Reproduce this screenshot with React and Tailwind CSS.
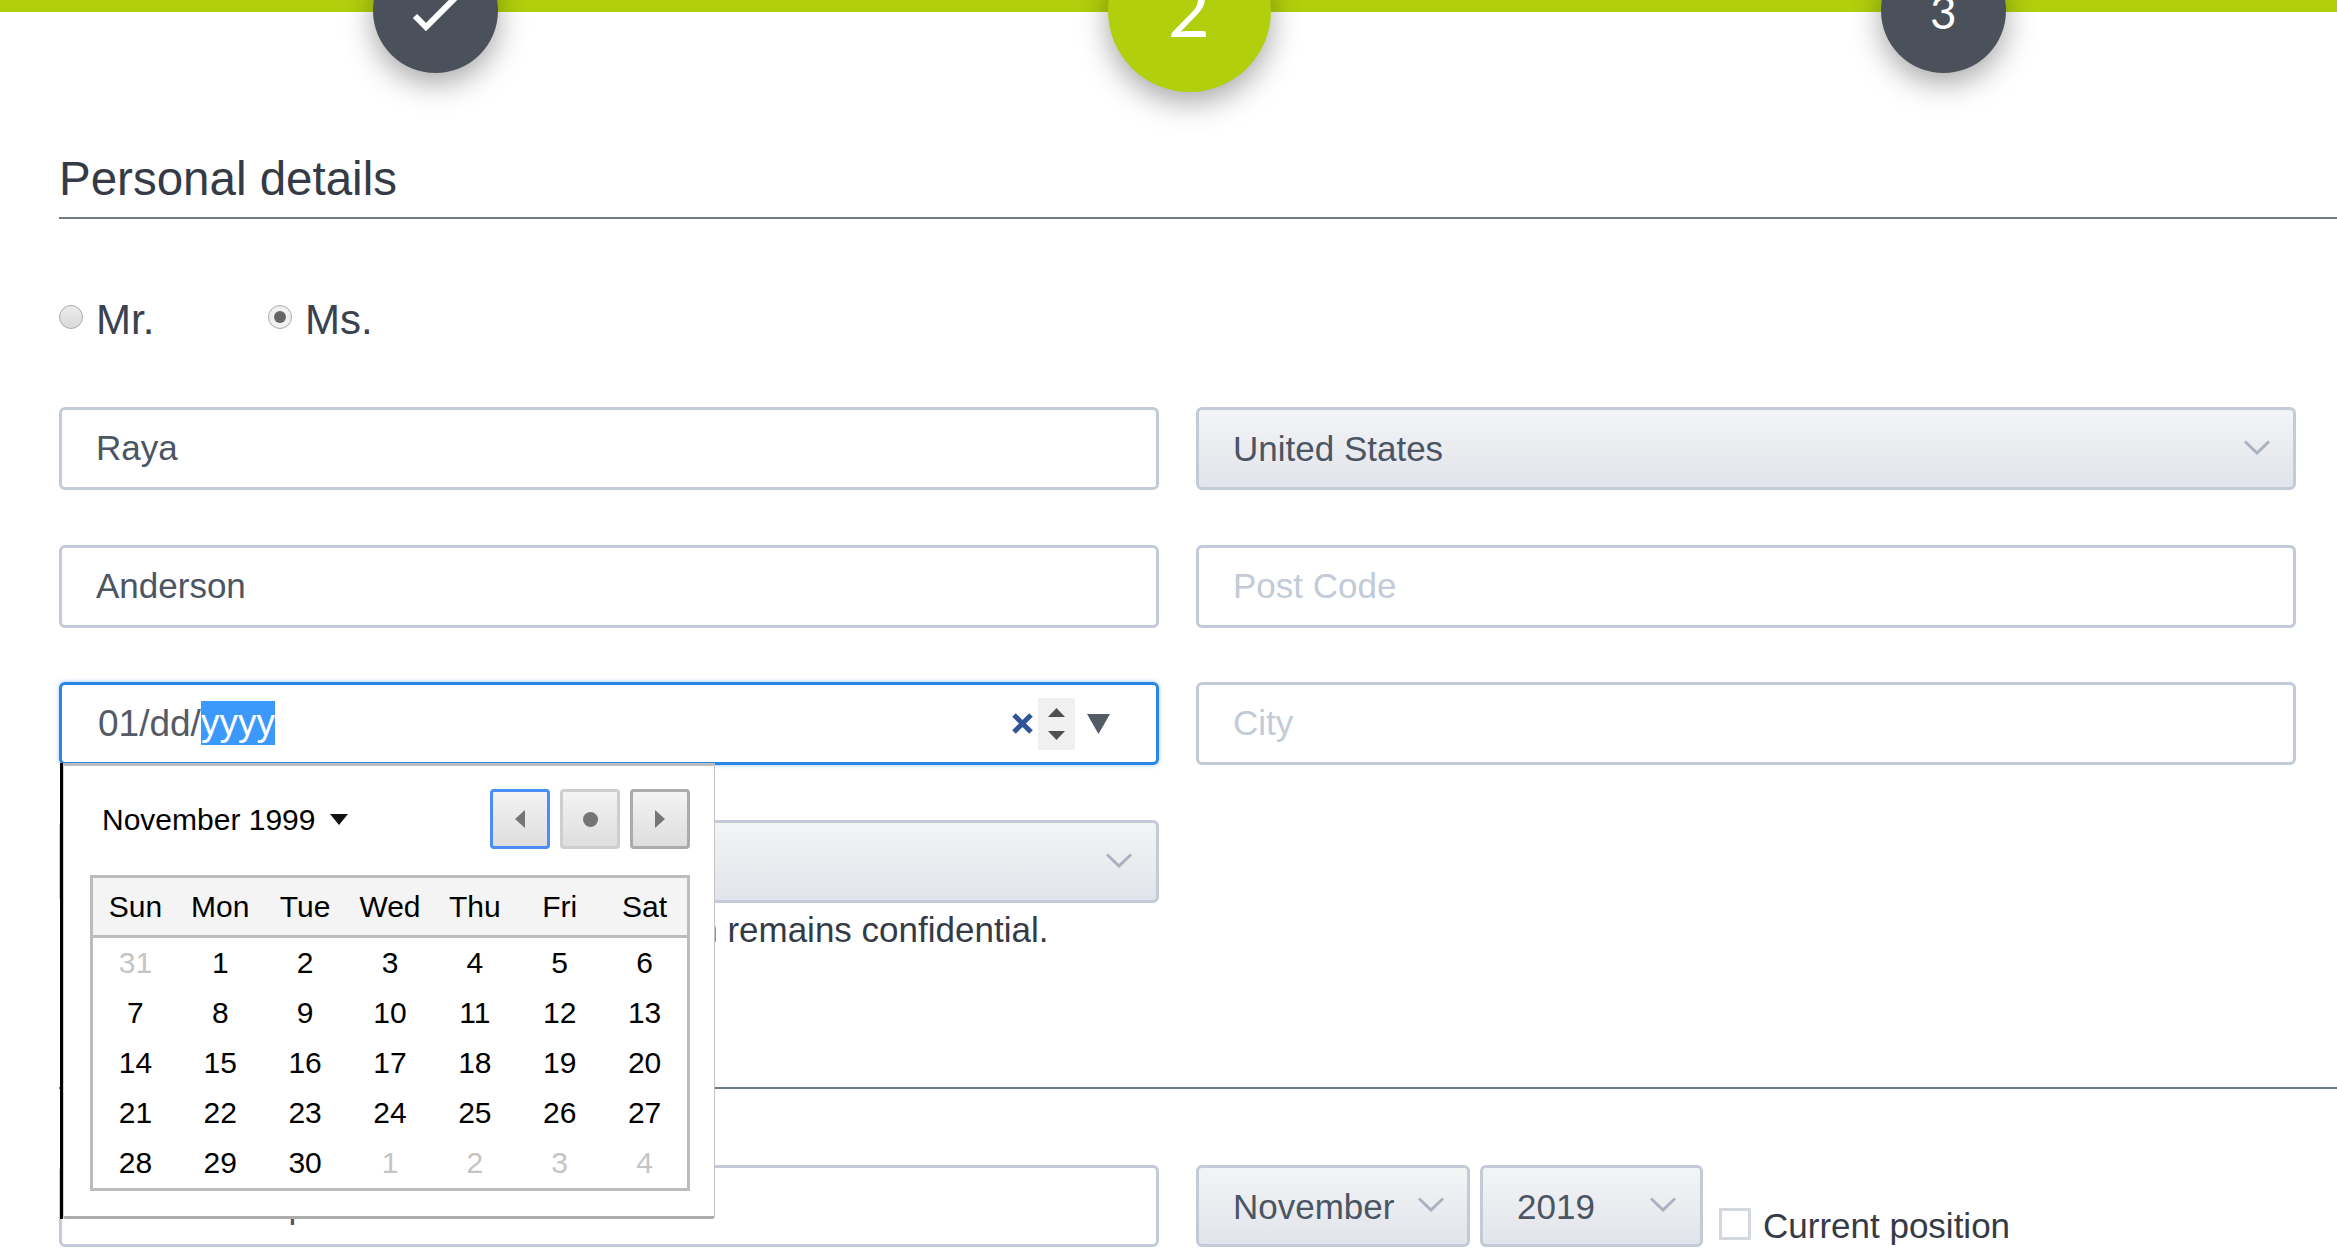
import React from 'react';

const FONT = { fontFamily: '"Liberation Sans", Arial, sans-serif' };

const WEEK_DAYS = ['Sun', 'Mon', 'Tue', 'Wed', 'Thu', 'Fri', 'Sat'];
const DAYS = [
  [31, 1, 2, 3, 4, 5, 6],
  [7, 8, 9, 10, 11, 12, 13],
  [14, 15, 16, 17, 18, 19, 20],
  [21, 22, 23, 24, 25, 26, 27],
  [28, 29, 30, 1, 2, 3, 4],
];

function Chevron({ className = '' }) {
  return (
    <svg width="26" height="15" viewBox="0 0 26 15" fill="none" className={className}>
      <path d="M1 1.5 L13 13 L25 1.5" stroke="#aab2c2" strokeWidth="3" />
    </svg>
  );
}

function TextField({ value, placeholder, textClass = '' }) {
  return (
    <div className="h-full border-[3px] border-[#c3cad8] rounded-[6px] bg-white flex items-center pl-[34px] text-[35px]">
      {value ? (
        <span className={`text-[#4b5563] ${textClass}`}>{value}</span>
      ) : (
        <span className={`text-[#c3cad8] ${textClass}`}>{placeholder}</span>
      )}
    </div>
  );
}

function SelectField({ value, className = '', pad = 'pr-[24px]' }) {
  return (
    <div className={`h-full border-[3px] border-[#c3cad8] rounded-[6px] bg-gradient-to-b from-[#f3f4f6] to-[#e1e4ea] flex items-center justify-between pl-[34px] ${pad} text-[35px] text-[#4b5563] ${className}`}>
      <span className="mt-[2px]">{value}</span>
      <Chevron className="-mt-[2px]" />
    </div>
  );
}

function StepCircle({ className, children }) {
  return (
    <div className={`absolute rounded-full shadow-[0_10px_30px_rgba(0,0,0,0.35)] ${className}`}>
      {children}
    </div>
  );
}

function NavButton({ className, children }) {
  return (
    <div className={`w-[60px] h-[60px] border-[3px] rounded-[4px] bg-gradient-to-b from-[#f3f3f3] to-[#dedede] flex items-center justify-center ${className}`}>
      {children}
    </div>
  );
}

function Calendar() {
  return (
    <div className="absolute left-[1px] top-[81px] w-[655px] h-[456px] border-l-[3px] border-black z-10">
      <div className="h-full bg-white border-t-[3px] border-b-[3px] border-l-[1px] border-r-[1px] border-t-[#bdbdbd] border-b-[#acacac] border-l-[#d0d0d0] border-r-[#c4c4c4] rounded-b-[3px] pl-[26px] pr-[24px] pt-[23px] text-black">
        <div className="flex items-center justify-between h-[60px]">
          <div className="flex items-center text-[30px] pl-[12px]">
            <span>November 1999</span>
            <svg width="18" height="11" viewBox="0 0 18 11" className="ml-[15px]">
              <path d="M0 0 H18 L9 11 Z" fill="#111" />
            </svg>
          </div>
          <div className="flex gap-[10px]">
            <NavButton className="border-[#4a8ef5]">
              <svg width="10" height="18" viewBox="0 0 10 18"><path d="M10 0 V18 L0 9 Z" fill="#757575" /></svg>
            </NavButton>
            <NavButton className="border-[#cecece]">
              <div className="w-[15px] h-[15px] rounded-full bg-[#757575]" />
            </NavButton>
            <NavButton className="border-[#ababab]">
              <svg width="10" height="18" viewBox="0 0 10 18"><path d="M0 0 V18 L10 9 Z" fill="#757575" /></svg>
            </NavButton>
          </div>
        </div>
        <div className="mt-[26px] border-[3px] border-[#bcbcbc] text-[30px]">
          <div className="grid grid-cols-7 h-[60px] bg-[#f4f4f4] border-b-[3px] border-[#bcbcbc] items-center text-center">
            {WEEK_DAYS.map((d) => (
              <span key={d}>{d}</span>
            ))}
          </div>
          <div className="grid grid-cols-7 auto-rows-[50px] items-center text-center pb-[1px] -mt-[1px]">
            {DAYS.map((row, r) =>
              row.map((d, c) => {
                const muted = (r === 0 && d > 7) || (r === 4 && d < 7);
                return (
                  <span key={`${r}-${c}`} className={muted ? 'text-[#c4c4c4]' : 'text-black'}>
                    {d}
                  </span>
                );
              })
            )}
          </div>
        </div>
      </div>
    </div>
  );
}

function DateField() {
  return (
    <div className="relative h-full">
      <div className="h-full border-[3px] border-[#2b85e4] rounded-[6px] bg-white shadow-[0_0_4px_rgba(43,133,228,0.5)] flex items-center pl-[36px] pr-[46px] text-[37px] text-[#555b66]">
        <span className="-mt-[1px]">01/dd/</span>
        <span className="bg-[#3b99fc] text-white h-[44px] leading-[44px] -mt-[1px]">yyyy</span>
        <svg width="21" height="21" viewBox="0 0 21 21" className="ml-auto">
          <path d="M2 2 L19 19 M19 2 L2 19" stroke="#2f5597" strokeWidth="5" />
        </svg>
        <div className="w-[37px] h-[52px] bg-[#f0f0f0] ml-[5px] flex flex-col items-center justify-center gap-[14px]">
          <svg width="17" height="9" viewBox="0 0 17 9"><path d="M8.5 0 L17 9 H0 Z" fill="#505050" /></svg>
          <svg width="17" height="9" viewBox="0 0 17 9"><path d="M0 0 H17 L8.5 9 Z" fill="#505050" /></svg>
        </div>
        <svg width="23" height="20" viewBox="0 0 23 20" className="ml-[12px]">
          <path d="M0 0 H23 L11.5 20 Z" fill="#555b66" />
        </svg>
      </div>
      <Calendar />
    </div>
  );
}

function Radio({ checked, label, className = '' }) {
  return (
    <label className={`flex items-center ${className}`}>
      <span className={`w-[24px] h-[24px] mt-[2px] rounded-full border border-[#aaaaaa] flex items-center justify-center ${checked ? 'bg-[#f0f0f0]' : 'bg-gradient-to-b from-[#ececec] to-[#dadada]'}`}>
        {checked && <span className="w-[12px] h-[12px] rounded-full bg-[#666666]" />}
      </span>
      <span className="ml-[13px] mt-[7px] text-[42px] text-[#3a4250]">{label}</span>
    </label>
  );
}

export default function App() {
  return (
    <div className="relative h-[1257px] overflow-hidden bg-white" style={FONT}>
      {/* 顶部步骤条 */}
      <div className="relative h-[12px] bg-[#b1cf0d]">
        <StepCircle className="left-[373px] top-[-52px] w-[125px] h-[125px] bg-[#4a515a]">
          <svg width="46" height="34" viewBox="0 0 46 34" className="absolute left-[39px] top-[52px]">
            <path d="M3 16 L14 27 L44 -3" fill="none" stroke="#fff" strokeWidth="6" />
          </svg>
        </StepCircle>
        <StepCircle className="left-[1108px] top-[-71px] w-[163px] h-[163px] bg-[#b1cf0d]">
          <span className="absolute left-[60px] top-[38px] text-[72px] leading-[84px] font-normal text-white" style={{ fontFamily: 'Lato, sans-serif' }}>2</span>
        </StepCircle>
        <StepCircle className="left-[1881px] top-[-52px] w-[125px] h-[125px] bg-[#4a515a]">
          <span className="absolute left-[49px] top-[37px] text-[46px] leading-[54px] font-normal text-white" style={{ fontFamily: 'Lato, sans-serif' }}>3</span>
        </StepCircle>
      </div>

      <div className="ml-[59px] mt-[137px]">
        <h2 className="text-[47.5px] leading-[60px] pb-[8px] border-b-2 border-[#6f7c88] text-[#343b47] font-normal">
          Personal details
        </h2>

        <div className="flex h-[48px] mt-[73px]">
          <Radio label="Mr." className="w-[209px]" />
          <Radio checked label="Ms." />
        </div>

        <div className="mt-[67px] pr-[41px] grid grid-cols-[1100px_1100px] gap-x-[37px] gap-y-[54.67px] auto-rows-[83px]">
          <TextField value="Raya" />
          <SelectField value="United States" pad="pr-[23px]" />
          <TextField value="Anderson" />
          <TextField placeholder="Post Code" />
          <DateField />
          <TextField placeholder="City" textClass="-mt-[2px]" />
          <SelectField value="Nationality" />
        </div>

        <p className="mt-[7px] pl-[27px] text-[35px] leading-[40px] text-[#343b47]">
          We guarantee that all of your information remains confidential.
        </p>

        <div className="mt-[137px] border-t-2 border-[#6f7c88]" />

        <div className="mt-[76px] pr-[41px] grid grid-cols-[1100px_1100px] gap-x-[37px] h-[82px]">
          <TextField value="Most recent position" />
          <div className="flex h-full">
            <SelectField value="November" className="w-[274px]" pad="pr-[23px]" />
            <SelectField value="2019" className="w-[223px] ml-[10px]" pad="pr-[24px]" />
            <div className="ml-[16px] flex items-end">
              <span className="w-[32px] h-[32px] border-[3px] border-[#d3d7e0] bg-white mb-[7px]" />
              <span className="ml-[12px] mb-[1px] text-[35px] leading-[40px] text-[#343b47]">Current position</span>
            </div>
          </div>
        </div>
      </div>
    </div>
  );
}
